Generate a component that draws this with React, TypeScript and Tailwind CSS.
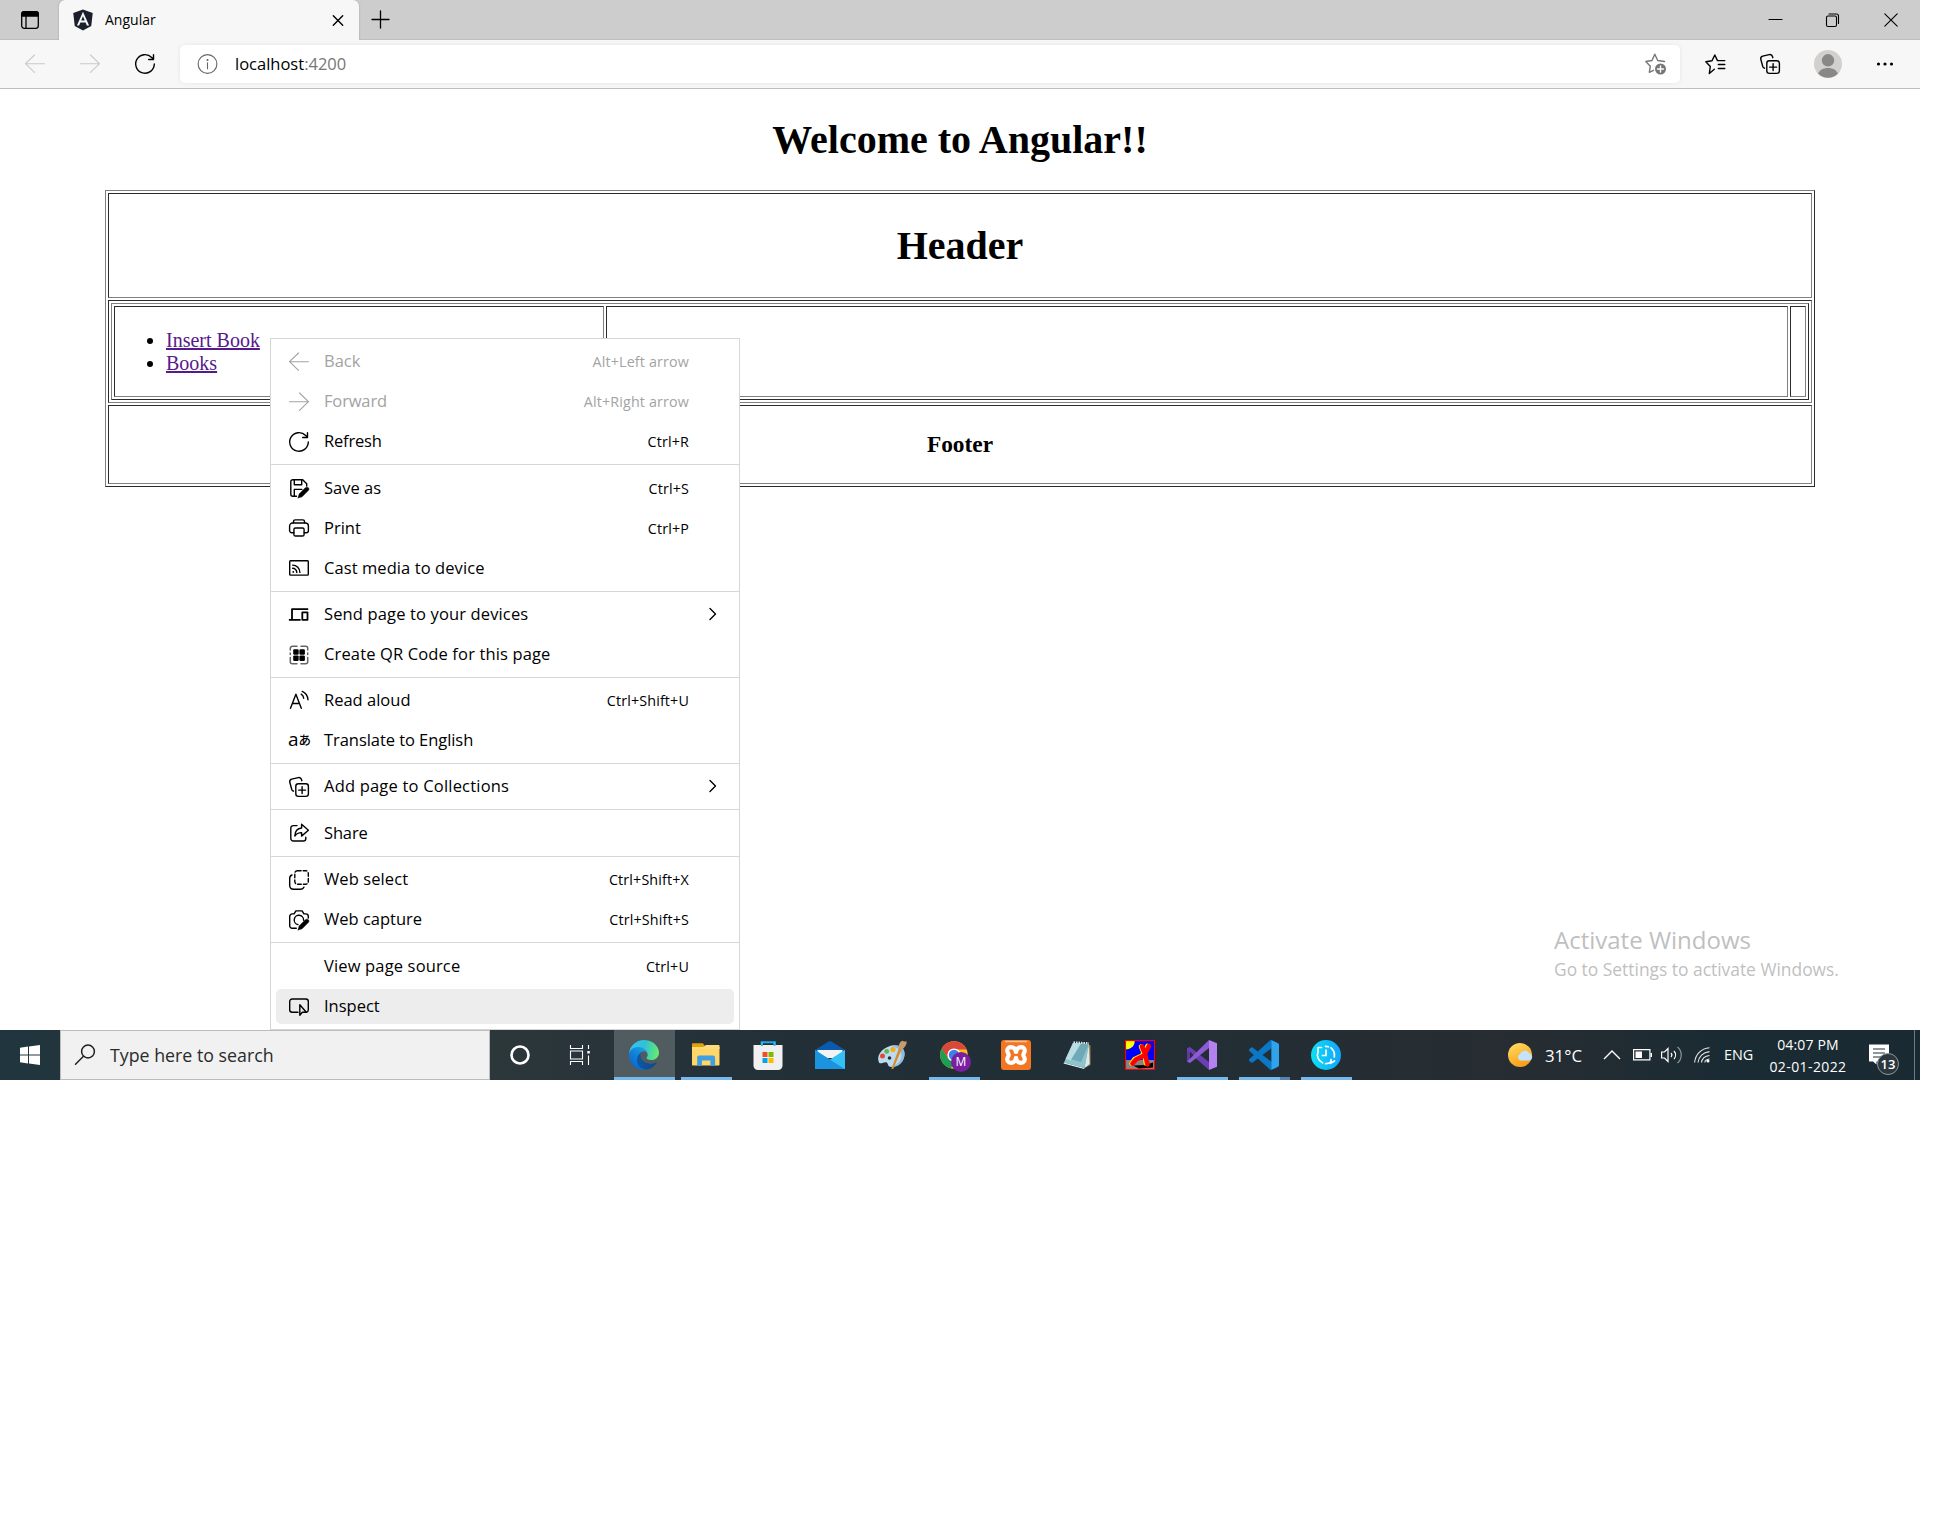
import React from "react";
import { FaAngular } from "react-icons/fa";

type IconProps = { children: React.ReactNode; className?: string; size?: number; sw?: number; vb?: string };

function Ico({ children, className = "", size = 20, sw = 1.2, vb = "0 0 20 20" }: IconProps) {
  return (
    <svg
      width={size}
      height={size}
      viewBox={vb}
      fill="none"
      stroke="currentColor"
      strokeWidth={sw}
      strokeLinecap="round"
      strokeLinejoin="round"
      className={`block shrink-0 overflow-visible ${className}`}
    >
      {children}
    </svg>
  );
}

const BackArrow = () => (
  <Ico sw={1.1}>
    <path d="M19.5 9.7H.5M9.5 1L.5 9.7l9 8.7" />
  </Ico>
);
const ForwardArrow = () => (
  <Ico sw={1.1}>
    <path d="M.5 9.7h19M10.500 1l9 8.700-9 8.700" />
  </Ico>
);
const Refresh = () => (
  <Ico sw={1.4}>
    <path d="M19.300 10A9.300 9.300 0 1 1 16.700 3.500L18.300 5M18.500 .8v4.700h-4.800" />
  </Ico>
);
const Collections = () => (
  <Ico sw={1.4}>
    <path d="M4.500 14.200C3.300 13.600 3 13.200 2.700 12.200L.8 5.300C.4 3.600 1.100 2.600 2.700 2.100l6.500-1.500c1.600-.4 2.800.3 3.300 1.900l.3 1.200" />
    <rect x="6.800" y="6.800" width="12.600" height="12.600" rx="2.600" />
    <path d="M13.100 9.600v7M9.600 13.100h7" />
  </Ico>
);
const PenOverlay = () => (
  <path d="M9.200 19.800l1-3.800 6.200-6.200c.9-.9 2.200-.8 2.900-.1s.8 2-.1 2.900L13 18.800l-3.800 1z" fill="currentColor" stroke="currentColor" strokeWidth="0.6" />
);
const SaveAs = () => (
  <Ico sw={1.4}>
    <path d="M7.500 18.300H3.800A2 2 0 0 1 1.800 16.300V3.700a2 2 0 0 1 2-2h9.900l4 4V8" />
    <path d="M5.300 2v4.800h7.400V2M5.300 18V11.400h7.500" />
    <PenOverlay />
  </Ico>
);
const Print = () => (
  <Ico sw={1.4}>
    <path d="M4.800 14.700H2.800a2.200 2.200 0 0 1-2.200-2.200V8a3 3 0 0 1 3-3h12.800a3 3 0 0 1 3 3v4.500a2.200 2.200 0 0 1-2.200 2.200h-2" />
    <path d="M4.500 4.800V3.600c0-1 .7-1.700 1.700-1.700h7.600c1 0 1.700.7 1.700 1.700v1.200" />
    <rect x="4.900" y="10" width="10.200" height="8" rx="1.600" />
  </Ico>
);
const Cast = () => (
  <Ico sw={1.4}>
    <rect x=".7" y="2.700" width="18.600" height="14.400" rx=".8" />
    <path d="M3.600 7.100a7.300 7.300 0 0 1 7.300 7.300M3.600 10.300a4.200 4.200 0 0 1 4.200 4.200" />
    <circle cx="4.300" cy="13.900" r=".9" fill="currentColor" stroke="none" />
  </Ico>
);
const Devices = () => (
  <Ico sw={1.8}>
    <path d="M3 14V4.200h15.300M.8 14.800h9.900" strokeLinecap="square" />
    <rect x="13.300" y="7.400" width="5.200" height="7.400" />
  </Ico>
);
const QrCode = () => (
  <Ico sw={1.5}>
    <path d="M1.300 5V3.300a2 2 0 0 1 2-2H8M12 1.300h4.700a2 2 0 0 1 2 2V5M18.700 12.500v4.200a2 2 0 0 1-2 2H12M8 18.700H3.300a2 2 0 0 1-2-2v-4.200M1.300 8v1.500M18.700 8v1.500" stroke="#666" />
    <g fill="currentColor" stroke="none">
      <rect x="4.200" y="4.200" width="5.500" height="5.500" rx="1.200" />
      <rect x="10.400" y="4.200" width="5.500" height="5.500" rx="1.200" />
      <rect x="4.200" y="10.400" width="5.500" height="5.500" rx="1.200" />
      <rect x="10.400" y="10.400" width="5.500" height="5.500" rx="1.200" />
    </g>
  </Ico>
);
const ReadAloud = () => (
  <Ico sw={1.4}>
    <path d="M1.500 17.300L6.900 3.200l5.400 14.100M3.400 12.500h7" />
    <path d="M12.200 3.200c1.500.9 2.300 2.100 2.500 4M13.200 .4c3.400 1.400 5.400 4.200 5.800 8.300" />
  </Ico>
);
const Translate = () => (
  <span className="flex h-5 w-[21px] items-center whitespace-nowrap text-[19px] leading-5">
    <span className="-ml-px -mt-[4px] w-[11px] font-['Open_Sans',sans-serif]">a</span>
    <span className="-mt-[2px] font-['Noto_Sans_CJK_JP',sans-serif] text-[12.500px] font-medium">あ</span>
  </span>
);
const Share = () => (
  <Ico sw={1.4}>
    <path d="M8 2.600H4.400a2.600 2.600 0 0 0-2.600 2.600v10.200A2.600 2.600 0 0 0 4.400 18h9.800a2.600 2.600 0 0 0 2.600-2.600v-1.200" />
    <path d="M12.600 1.300l6.800 6-6.800 5.800V9.600c-3.200 0-5.300 1.100-6.800 3.400.2-4.400 2.500-7.600 6.800-8z" />
  </Ico>
);
const WebSelect = () => (
  <Ico sw={1.4}>
    <rect x="5.800" y=".7" width="13.500" height="13.500" rx="2.600" strokeDasharray="3.700 2.100" />
    <path d="M3 5C1.300 5.600.7 6.700.7 8.300v7c0 2.500 1.500 4 4 4h7c1.700 0 2.700-.6 3.300-2.200" />
  </Ico>
);
const WebCapture = () => (
  <Ico sw={1.4}>
    <path d="M7.300 18.200H3.200A2.500 2.500 0 0 1 .7 15.700V6.400a2.500 2.500 0 0 1 2.500-2.500h1.900L6.900.9h6.200l1.800 3h1.900a2.500 2.500 0 0 1 2.500 2.500V8" />
    <path d="M9 14.600a4.700 4.700 0 1 1 5.600-4.400" />
    <PenOverlay />
  </Ico>
);
const Inspect = () => (
  <Ico sw={1.4}>
    <path d="M9 16.300H3.200a2.500 2.500 0 0 1-2.500-2.500V5.500A2.500 2.500 0 0 1 3.200 3h13.600a2.500 2.500 0 0 1 2.500 2.500v8.300c0 1.400-.8 2.200-1.800 2.400" />
    <path d="M10.800 8.700v10.500l2.500-2.900h4z" />
  </Ico>
);

type Item = {
  icon?: React.ReactNode;
  label: string;
  track?: string;
  keys?: string;
  sub?: boolean;
  off?: boolean;
  hot?: boolean;
};
type Group = { box: string; items: Item[] };

const groups: Group[] = [
  {
    box: "h-[126px]",
    items: [
      { icon: <BackArrow />, label: "Back", keys: "Alt+Left arrow", off: true },
      { icon: <ForwardArrow />, label: "Forward", track: "tracking-[-0.15px]", keys: "Alt+Right arrow", off: true },
      { icon: <Refresh />, label: "Refresh", track: "tracking-[-0.2px]", keys: "Ctrl+R" },
    ],
  },
  {
    box: "h-[127px]",
    items: [
      { icon: <SaveAs />, label: "Save as", keys: "Ctrl+S" },
      { icon: <Print />, label: "Print", keys: "Ctrl+P" },
      { icon: <Cast />, label: "Cast media to device", track: "tracking-[0.08px]" },
    ],
  },
  {
    box: "h-[86px]",
    items: [
      { icon: <Devices />, label: "Send page to your devices", track: "tracking-[0.14px]", sub: true },
      { icon: <QrCode />, label: "Create QR Code for this page", track: "tracking-[0.14px]" },
    ],
  },
  {
    box: "h-[86px]",
    items: [
      { icon: <ReadAloud />, label: "Read aloud", keys: "Ctrl+Shift+U" },
      { icon: <Translate />, label: "Translate to English", track: "tracking-[-0.06px]" },
    ],
  },
  {
    box: "h-[46px]",
    items: [{ icon: <Collections />, label: "Add page to Collections", track: "tracking-[0.2px]", sub: true }],
  },
  { box: "h-[47px]", items: [{ icon: <Share />, label: "Share", track: "tracking-[-0.15px]" }] },
  {
    box: "h-[86px]",
    items: [
      { icon: <WebSelect />, label: "Web select", track: "tracking-[0.1px]", keys: "Ctrl+Shift+X" },
      { icon: <WebCapture />, label: "Web capture", keys: "Ctrl+Shift+S" },
    ],
  },
  {
    box: "h-[86px]",
    items: [
      { label: "View page source", track: "tracking-[0.15px]", keys: "Ctrl+U" },
      { icon: <Inspect />, label: "Inspect", hot: true },
    ],
  },
];

function ContextMenu() {
  return (
    <div className="absolute left-[270px] top-[338px] w-[470px] border border-[#d6d6d6] bg-white">
      {groups.map((g, gi) => (
        <div
          key={gi}
          className={`${g.box} flex flex-col justify-center ${gi < groups.length - 1 ? "border-b border-[#d6d6d6]" : ""}`}
        >
          {g.items.map((it) => (
            <div key={it.label} className={`flex h-10 items-center px-[5px] ${it.off ? "text-[#a3a3a3]" : "text-black"}`}>
              <div className={`flex h-[35px] w-full items-center rounded-[5px] pl-[13px] ${it.hot ? "bg-[#ededed]" : ""}`}>
                <span className="flex w-[35px] shrink-0 items-center">{it.icon}</span>
                <span className={`flex-1 whitespace-nowrap pb-px text-[16.500px] leading-5 ${it.track ?? ""}`}>{it.label}</span>
                {it.keys && (
                  <span className="mr-[45px] whitespace-nowrap pt-px text-[14.300px] leading-5 tracking-[0.15px]">{it.keys}</span>
                )}
                {it.sub && (
                  <Ico size={14} vb="0 0 14 14" sw={1.4} className="mb-px mr-[14px]">
                    <path d="M4 1.500l5.500 5.500L4 12.500" />
                  </Ico>
                )}
              </div>
            </div>
          ))}
        </div>
      ))}
    </div>
  );
}

function TabStrip() {
  return (
    <div className="flex h-10 items-end bg-[#cdcdcd] shadow-[inset_0_-1px_0_#bdbdbd]">
      <div className="flex h-10 w-[59px] items-center pl-[21px]">
        <Ico size={18} vb="0 0 18 18" sw={1.3}>
          <rect x=".7" y=".7" width="16.600" height="16.600" rx="2.500" />
          <path d="M.7 5V3A2.400 2.400 0 0 1 3 .7h12A2.400 2.400 0 0 1 17.300 3v2z" fill="currentColor" />
          <path d="M5 5v12" />
        </Ico>
      </div>
      <div className="flex h-10 w-[300px] items-center rounded-t-[6px] bg-[#f7f7f7] pl-[11px] pr-[14px] shadow-[0_0_2px_rgba(0,0,0,0.25)] [clip-path:inset(0_-3px_0_-3px)]">
        <FaAngular className="h-[24px] w-[26px] text-[#1b1f2b]" />
        <span className="ml-[9px] flex-1 text-[14px] leading-5 text-black">Angular</span>
        <Ico size={16} vb="0 0 16 16" sw={1.4} className="mr-[-1px]">
          <path d="M3.300 3.800l9.400 9.400M12.700 3.800l-9.400 9.400" />
        </Ico>
      </div>
      <div className="flex h-10 flex-1 items-center pb-px pl-[13px]">
        <Ico size={17} vb="0 0 17 17" sw={1.3}>
          <path d="M8.500 0v17M0 8.500h17" />
        </Ico>
      </div>
      <div className="flex h-10 items-center gap-[44px] pb-px pr-[22px]">
        <Ico size={13} vb="0 0 13 13" sw={1.1}>
          <path d="M0 6.500h13" />
        </Ico>
        <Ico size={14} vb="0 0 14 14" sw={1.1}>
          <rect x=".5" y="3" width="10" height="10.500" rx="1.500" />
          <path d="M3 1h7.500a2 2 0 0 1 2 2v7.500" />
        </Ico>
        <Ico size={14} vb="0 0 14 14" sw={1.100}>
          <path d="M.8 .8l12.400 12.400M13.200 .8L.8 13.200" />
        </Ico>
      </div>
    </div>
  );
}

function Toolbar() {
  return (
    <div className="flex h-[49px] items-center border-b border-[#bdbdbd] bg-[#f7f7f7]">
      <div className="flex w-[180px] items-center gap-[35px] pl-[25px] text-[#c9c9c9]">
        <BackArrow />
        <ForwardArrow />
        <span className="text-black">
          <Refresh />
        </span>
      </div>
      <div className="flex h-[38px] w-[1500px] items-center rounded-[5px] bg-white pl-[17px] pr-[13px] shadow-[0_0_4px_rgba(0,0,0,0.08)]">
        <Ico sw={1.100} className="text-[#666]">
          <circle cx="10.500" cy="10" r="9.400" />
          <path d="M10.500 8.700v6" />
          <circle cx="10.500" cy="6" r=".5" fill="currentColor" />
        </Ico>
        <span className="ml-[18px] flex-1 pb-px text-[16.500px] leading-6 text-black">
          localhost<span className="text-[#767676]">:4200</span>
        </span>
        <Ico size={22} vb="0 0 22 22" sw={1.400} className="text-[#767676]">
          <path d="M8.500 17.300L4.300 19.300l1-6L.8 8.500l6.200-1L9.800 1.200l2.900 6.300 6.800 1" />
          <circle cx="15.500" cy="16" r="5.500" fill="currentColor" stroke="none" />
          <path d="M15.500 13v6M12.500 16h6" stroke="#fff" />
        </Ico>
      </div>
      <div className="flex flex-1 items-center pl-[25px] text-black">
        <Ico size={21} vb="0 0 21 21" sw={1.400}>
          <path d="M9.300 15.300L4.300 19.500l1-7L.8 7.800l6.200-1L9.800 1l2.700 5.600h7.300M13.300 10.500h6.500M13.300 14.500h6.500" />
        </Ico>
        <span className="ml-[34px]">
          <Collections />
        </span>
        <svg width="28" height="28" viewBox="0 0 28 28" className="ml-[34px]">
          <defs>
            <clipPath id="avatar">
              <circle cx="14" cy="14" r="13.800" />
            </clipPath>
          </defs>
          <circle cx="14" cy="14" r="14" fill="#d2d0ce" />
          <g clipPath="url(#avatar)" fill="#8a8886">
            <circle cx="14" cy="10.300" r="6.200" />
            <path d="M4 24c1.500-4 5-6 10-6s8.500 2 10 6v4H4z" />
          </g>
        </svg>
        <svg width="18" height="4" viewBox="0 0 18 4" className="ml-[34px]">
          <circle cx="2.500" cy="2" r="1.600" />
          <circle cx="9" cy="2" r="1.600" />
          <circle cx="15.500" cy="2" r="1.600" />
        </svg>
      </div>
    </div>
  );
}

const OUTSET = "border border-t-[#808080] border-l-[#808080] border-r-[#2c2c2c] border-b-[#2c2c2c]";
const INSET = "border border-t-[#2c2c2c] border-l-[#2c2c2c] border-r-[#808080] border-b-[#808080]";

function PageContent() {
  return (
    <div className="h-[941px] font-['Liberation_Serif',serif] text-black">
      <h1 className="pt-[28px] text-center text-[40px] font-bold leading-[46px]">Welcome to Angular!!</h1>
      <div className={`${OUTSET} ml-[105px] mt-[27px] flex h-[297px] w-[1710px] flex-col gap-[2px] p-[2px]`}>
        <div className={`${INSET} flex h-[105px] items-center justify-center`}>
          <h1 className="text-[40px] font-bold leading-[46px]">Header</h1>
        </div>
        <div className={`${INSET} h-[103px] p-[2px]`}>
          <div className={`${OUTSET} flex h-full gap-[2px] p-[2px]`}>
            <div className={`${INSET} flex w-[490px] items-center pt-px`}>
              <ul className="list-disc pl-[51px] text-[20px] leading-[23px]">
                <li>
                  <a className="text-[#551a8b] underline">Insert Book</a>
                </li>
                <li>
                  <a className="text-[#551a8b] underline">Books</a>
                </li>
              </ul>
            </div>
            <div className={`${INSET} flex-1`} />
            <div className={`${INSET} w-4`} />
          </div>
        </div>
        <div className={`${INSET} flex h-[79px] items-center justify-center pb-[2px]`}>
          <h3 className="text-[23.400px] font-bold leading-7">Footer</h3>
        </div>
      </div>
    </div>
  );
}

const EdgeLogo = () => (
  <svg width="30" height="30" viewBox="0 0 256 256">
    <defs>
      <linearGradient id="e1" x1="60" y1="170" x2="240" y2="200" gradientUnits="userSpaceOnUse">
        <stop offset="0" stopColor="#0c59a4" />
        <stop offset="1" stopColor="#114a8b" />
      </linearGradient>
      <linearGradient id="e2" x1="150" y1="90" x2="50" y2="230" gradientUnits="userSpaceOnUse">
        <stop offset="0" stopColor="#1b9de2" />
        <stop offset="0.500" stopColor="#1280d6" />
        <stop offset="1" stopColor="#0a6bd0" />
      </linearGradient>
      <linearGradient id="e3" x1="20" y1="50" x2="250" y2="110" gradientUnits="userSpaceOnUse">
        <stop offset="0" stopColor="#35c1f1" />
        <stop offset="0.450" stopColor="#2fc2d4" />
        <stop offset="1" stopColor="#66eb6e" />
      </linearGradient>
    </defs>
    <path fill="url(#e1)" d="M231 190.500c-3.400 1.800-6.900 3.400-10.500 4.700a101.700 101.700 0 01-35.700 6.400c-47 0-88-32.300-88-73.900a31.400 31.400 0 0116.300-27.300c-42.600 1.800-53.500 46.200-53.500 72.100 0 73.500 67.700 80.900 82.300 80.900 7.900 0 19.800-2.300 26.900-4.500l1.300-.5A128.300 128.300 0 00238 195a4.800 4.800 0 00-7-4.500z" />
    <path fill="url(#e2)" d="M105.700 241.400a79.200 79.200 0 01-22.700-21.300 80.700 80.700 0 0129.500-120c3.200-1.500 8.500-4.100 15.600-4a32.400 32.400 0 0125.700 13 31.900 31.900 0 016.300 18.700c0-.2 24.500-79.600-80-79.600-43.900 0-80 41.700-80 78.200a130.200 130.200 0 0012.100 56 128 128 0 00156.400 67 75.500 75.500 0 01-62.800-8z" />
    <path fill="url(#e3)" d="M152.300 148.900c-.8 1-3.300 2.500-3.300 5.700 0 2.600 1.700 5.100 4.700 7.200 14.400 10 41.500 8.700 41.600 8.700 10.700 0 21.100-2.900 30.300-8.300A61.400 61.400 0 00256 109.200c.3-22.400-8-37.300-11.300-43.900C223.500 23.900 177.700 0 128 0A128 128 0 000 126.200c.5-36.500 36.800-66 80-66 3.500 0 23.500.3 42 10a72.600 72.600 0 0130.900 29.300c6.100 10.600 7.200 24.100 7.200 29.500s-2.700 13.300-7.800 19.900z" />
  </svg>
);

const ExplorerLogo = () => (
  <svg width="30" height="30" viewBox="0 0 30 30">
    <path d="M1 4.500c0-.8.500-1.300 1.200-1.300h9.500l2.600 3V10H1z" fill="#e2a10c" />
    <path d="M1 7h27.500v17.500c0 .7-.4 1-1 1H2c-.7 0-1-.4-1-1z" fill="#ffd667" />
    <path d="M1 7h11.500l2.500-2h12.500c.6 0 1 .3 1 1v3H1z" fill="#ffdc7a" />
    <path d="M6.200 25.800v-8.300c0-1.200.8-2 2-2h13.900c1.200 0 2 .8 2 2v8.300h-4.700v-5.300h-8.500v5.300z" fill="#3f9fe0" />
  </svg>
);

const StoreLogo = () => (
  <svg width="30" height="30" viewBox="0 0 30 30">
    <path d="M8.700 7V2.200h13V7" fill="none" stroke="#1fa8ee" strokeWidth="2" />
    <path d="M.5 5h29v20.500c0 2.500-1.800 4.500-4.500 4.500H5c-2.700 0-4.500-2-4.500-4.500z" fill="#f0f0f0" />
    <path d="M8 2h2v4H8zM20.500 2h2v4h-2z" fill="#32b5f2" />
    <rect x="9.500" y="12" width="5" height="5" fill="#f25022" />
    <rect x="15.500" y="12" width="5" height="5" fill="#7fba00" />
    <rect x="9.500" y="18" width="5" height="5" fill="#00a4ef" />
    <rect x="15.500" y="18" width="5" height="5" fill="#ffb900" />
  </svg>
);

const MailLogo = () => (
  <svg width="30" height="30" viewBox="0 0 30 30">
    <path d="M0 10L13.500 1.600c1-.6 2-.6 3 0L30 10v4H0z" fill="#0a5aad" />
    <path d="M2.500 10h25v8H2.500z" fill="#f3f3f3" />
    <path d="M0 10l15 10 15-10v19H0z" fill="#36bdf3" />
    <path d="M0 10l30 19H0z" fill="#1b94e0" />
    <path d="M15 19.400L30 10v19z" fill="#35c0f5" />
  </svg>
);

const PaintLogo = () => (
  <svg width="32" height="30" viewBox="0 0 32 30">
    <path d="M14 6c7-2.300 14 .5 14.500 7 .5 8-5.500 14-13 14-4 0-3-3-4.800-4.500C8.500 21 5 25 3 22.500 0 16 5.500 8.500 14 6z" fill="#bcdcee" />
    <path d="M14 6c7-2.300 14 .5 14.500 7 .5 8-5.500 14-13 14 8-3 11.500-9 9.500-14-1.300-4-5-6.500-11-7z" fill="#8fbdda" />
    <circle cx="6.500" cy="16" r="2.500" fill="#e04a3f" />
    <circle cx="10.700" cy="11.400" r="2.400" fill="#58b947" />
    <circle cx="17" cy="9.500" r="2.600" fill="#f2b01e" />
    <circle cx="13.500" cy="18" r="1.800" fill="#22313a" />
    <path d="M15.300 29l7.700-21 2.800 1-8.500 20z" fill="#d98a35" />
    <path d="M22.500 8c.5-3.500 1-6.500 4-7.300 1.500.8 2.500 1 4.300.8-.2 3.500-2 6-4.800 8z" fill="#c99b6a" />
  </svg>
);

const ChromeLogo = () => (
  <div className="relative h-[30px] w-[30px]">
    <svg width="34" height="34" viewBox="0 0 34 34" className="block">
      <defs>
        <clipPath id="chr">
          <circle cx="15" cy="15" r="13.800" />
        </clipPath>
      </defs>
      <g clipPath="url(#chr)">
        <rect width="30" height="30" fill="#fbc116" />
        <path d="M0 5L15 0h15v9.500H15L9 18 0 5z" fill="#d9483b" />
        <path d="M1.500 7L9 18l6 4-4 8H0V5z" fill="#1e9d55" />
      </g>
      <circle cx="15" cy="15" r="6.600" fill="#fff" />
      <circle cx="15" cy="15" r="5.200" fill="#3f7fe8" />
      <circle cx="22" cy="22" r="10" fill="#7a1fa2" />
    </svg>
    <span className="absolute left-[12px] top-[12px] w-5 text-center font-['Open_Sans',sans-serif] text-[12px] leading-5 text-white">M</span>
  </div>
);

const XamppLogo = () => (
  <svg width="30" height="30" viewBox="0 0 30 30">
    <rect width="30" height="30" rx="3" fill="#f37623" />
    <path d="M4 1.500h22" stroke="#fbc39a" strokeWidth="1.500" />
    <path
      d="M15 12.300C14.500 9 12.500 7.200 9.800 7.200 7 7.200 5.800 9.500 6.500 11.800c.4 1.300 1.200 2 1.200 3.200s-1 2-1.300 3.200c-.6 2.300.8 4.600 3.500 4.600 2.600 0 4.600-1.800 5.100-5.100.5 3.300 2.500 5.100 5.100 5.100 2.700 0 4.100-2.300 3.500-4.600-.3-1.200-1.300-2-1.300-3.200s.8-1.900 1.200-3.200c.7-2.300-.5-4.600-3.300-4.600-2.700 0-4.700 1.800-5.200 5.100z"
      fill="none"
      stroke="#fff"
      strokeWidth="4.200"
      strokeLinejoin="round"
    />
    <path d="M10.500 15h9" stroke="#f37623" strokeWidth="2.200" />
  </svg>
);

const NotepadLogo = () => (
  <svg width="30" height="30" viewBox="0 0 30 30">
    <path d="M24 4l3.500 1.500V25l-6 3z" fill="#9a7a45" />
    <path d="M10 3l16 1-4.500 24L1 22.500z" fill="#8fc3cf" />
    <path d="M10 3l16 1-8 18L4 18z" fill="#6fa9b8" />
    <path d="M10 3l8 .5L7.500 20.500l-5-1.500z" fill="#b9dde3" />
    <path d="M26 4l.7 20-5.200 4z" fill="#d5edf0" />
    <path d="M1 22.500l20.500 5.500-.3 1L.5 23.500z" fill="#e9f5f7" />
    <path d="M10.500 2.300l15.500 1" stroke="#e0e6e8" strokeWidth="2" strokeDasharray="1.500 1" />
  </svg>
);

const FigureLogo = () => (
  <svg width="30" height="30" viewBox="0 0 30 30">
    <rect width="30" height="30" fill="#0000fe" />
    <path d="M0 20h30v10H0z" fill="#868686" />
    <path d="M0 0h9.500c1 5-3 9.500-9.500 9.500z" fill="#ffff00" />
    <path d="M8 25.500l12-.5 8-2.500v5l-14 1z" fill="#000" />
    <g fill="none" strokeLinecap="round" strokeLinejoin="round">
      <path d="M16 6.500l3 7 2 10M22.500 6L17 15.500 9.500 19l-3 4.500" stroke="#ffe000" strokeWidth="4.600" />
      <path d="M17 6.500l3 7 2.500 11M24 6l-5 9.500-8 4-3.500 4" stroke="#ff0000" strokeWidth="4.600" />
    </g>
    <rect x=".5" y=".5" width="29" height="29" fill="none" stroke="#ff0000" strokeWidth="1.200" />
  </svg>
);

const VisualStudioLogo = () => (
  <svg width="30" height="30" viewBox="0 0 30 30">
    <path d="M0 8.500L3 7v16L0 21.500z" fill="#5d3aa0" />
    <path d="M3 7l19 15v8L0 10.500V8.500z" fill="#6b3fb3" />
    <path d="M0 21.500L22 0v8L3 23z" fill="#9059d6" />
    <path d="M22 0l8 3.300v23.400L22 30z" fill="#b382f0" />
    <path d="M3 11.500v7L6.500 15z" fill="#263036" />
  </svg>
);

const VsCodeLogo = () => (
  <svg width="30" height="30" viewBox="0 0 24 24">
    <path
      fill="#0a78c6"
      d="M23.150 2.587L18.210.21a1.494 1.494 0 0 0-1.705.29l-9.460 8.630-4.120-3.128a.999.999 0 0 0-1.276.057L.327 7.261A1 1 0 0 0 .326 8.740L3.899 12 .326 15.260a1 1 0 0 0 .001 1.479L1.650 17.940a.999.999 0 0 0 1.276.057l4.120-3.128 9.460 8.630a1.492 1.492 0 0 0 1.704.290l4.942-2.377A1.500 1.500 0 0 0 24 20.060V3.939a1.500 1.500 0 0 0-.850-1.352zm-5.146 14.861L10.826 12l7.178-5.448v10.896z"
    />
    <path d="M18 .2l5.200 2.400c.5.300.8.800.8 1.400v16c0 .6-.3 1.100-.8 1.400L18 23.800z" fill="#2fa3ec" />
  </svg>
);

const ClockLogo = () => (
  <svg width="30" height="30" viewBox="0 0 30 30">
    <defs>
      <linearGradient id="clk" x1="0" y1="0" x2="1" y2="0">
        <stop offset="0" stopColor="#0be0f5" />
        <stop offset="1" stopColor="#12a4fb" />
      </linearGradient>
    </defs>
    <circle cx="15" cy="15" r="15" fill="url(#clk)" />
    <g fill="none" stroke="#fff" strokeWidth="1.700" strokeLinecap="round">
      <path d="M7 8v4.500M10.500 7.500H7M7.200 11.500a8.500 8.500 0 0 0 4.300 11.300M14.500 23.700c2 .1 4-.5 5.500-1.800M23.300 17c.6-3.500-.4-6.800-3.300-9.200M14.500 6.300c1 0 2 .1 3 .5M20 19.500V23l3.500-2" />
      <path d="M15 10v5.500h-3.500" />
    </g>
  </svg>
);

type App = { logo: React.ReactNode; run?: boolean; active?: boolean; stack?: boolean };
const apps: App[] = [
  { logo: <EdgeLogo />, active: true },
  { logo: <ExplorerLogo />, run: true },
  { logo: <StoreLogo /> },
  { logo: <MailLogo /> },
  { logo: <PaintLogo /> },
  { logo: <ChromeLogo />, run: true },
  { logo: <XamppLogo /> },
  { logo: <NotepadLogo /> },
  { logo: <FigureLogo /> },
  { logo: <VisualStudioLogo />, run: true },
  { logo: <VsCodeLogo />, run: true, stack: true },
  { logo: <ClockLogo />, run: true },
];

function Taskbar() {
  return (
    <div className="flex h-[50px] items-stretch bg-[linear-gradient(90deg,#20353e_0,#22353d_60px,#2c373a_490px,#28343a_610px,#232f37_800px,#222e36_1100px,#272d32_1500px,#1b2b33_1720px,#192a33_1920px)] text-white">
      <div className="flex w-[60px] items-center pl-5">
        <svg width="20" height="20" viewBox="0 0 20 20" fill="#fff">
          <path d="M0 2.800L8 1.600V9.500H0zM9 1.500L20 0v9.500H9zM0 10.500h8v7.900l-8-1.200zM9 10.500h11V20L9 18.500z" />
        </svg>
      </div>
      <div className="flex w-[430px] items-center border border-[#bcbcbc] bg-[#f1f1f1] pl-[14px] text-[#1f1f1f]">
        <Ico size={21} vb="0 0 21 21" sw={1.500} className="mb-px">
          <circle cx="13" cy="7.500" r="6.400" />
          <path d="M8.500 12.200L.5 20.200" />
        </Ico>
        <span className="ml-[14px] text-[17.800px] leading-6 text-[#2b2b2b]">Type here to search</span>
      </div>
      <div className="flex w-[123px] items-center pl-5">
        <svg width="20" height="20" viewBox="0 0 20 20">
          <circle cx="10" cy="10" r="8.500" fill="none" stroke="#fff" strokeWidth="2.600" />
        </svg>
        <svg width="22" height="20" viewBox="0 0 22 20" fill="none" stroke="#fff" strokeWidth="1.100" className="ml-[39px]">
          <path d="M1.500 0v3.500h12V0M1.500 20v-3.500h12V20M1.500 6h12v8h-12zM19.500 0v4M19.500 10.500V20" />
          <rect x="18.300" y="6" width="2.500" height="2.500" fill="#fff" stroke="none" />
        </svg>
      </div>
      <div className="flex">
        {apps.map((a, i) => (
          <div key={i} className="flex w-[62px] flex-col items-center pl-px">
            <div className={`flex h-[47px] w-full items-center justify-center pr-px pt-[3px] ${a.active ? "bg-[#515c61]" : ""}`}>
              {a.logo}
            </div>
            {a.active && <div className="h-[3px] w-full bg-[#76b9ed]" />}
            {a.run && (
              <div className="flex h-[3px] w-[51px] bg-[#76b9ed]">{a.stack && <div className="ml-[41px] w-[10px] bg-[#5585ad]" />}</div>
            )}
          </div>
        ))}
      </div>
      <div className="flex flex-1 items-center pl-[151px]">
        <svg width="26" height="26" viewBox="0 0 26 26" className="shrink-0">
          <defs>
            <linearGradient id="sun" x1="0" y1="0" x2=".4" y2="1">
              <stop offset="0" stopColor="#ffe066" />
              <stop offset="1" stopColor="#f9a01b" />
            </linearGradient>
          </defs>
          <circle cx="12" cy="13" r="12" fill="url(#sun)" />
          <path d="M12.500 18.500a3.500 3.500 0 0 1-.5-6.500 5 5 0 0 1 9-1 4 4 0 0 1 1 7.500z" fill="#c4e3fb" />
        </svg>
        <span className="ml-[11px] w-[40px] whitespace-nowrap pt-[2px] text-[16.800px] leading-5">31°C</span>
        <Ico size={16} vb="0 0 16 16" sw={1.400} className="ml-[19px]">
          <path d="M0 12l8-8 8 8" strokeLinecap="butt" strokeLinejoin="miter" />
        </Ico>
        <svg width="19" height="12" viewBox="0 0 19 12" className="ml-[13px]">
          <path d="M.6.6h16.300v10.300H.6z" fill="none" stroke="#fff" strokeWidth="1.200" />
          <path d="M2.500 2.500H9V9H2.500zM17.500 4H19v4h-1.500z" fill="#fff" />
        </svg>
        <svg width="21" height="18" viewBox="0 0 21 18" fill="none" stroke="#fff" strokeWidth="1.200" className="ml-[9px]">
          <path d="M.6 6h2.900L7 2.500v13L3.500 12H.6z" />
          <path d="M10 7a3 3 0 0 1 0 4M13 5a6 6 0 0 1 0 8" />
          <path d="M16.500 1a10.500 10.500 0 0 1 0 16" stroke="#8d969a" />
        </svg>
        <svg width="16" height="16" viewBox="0 0 16 16" fill="none" stroke="#e8e8e8" strokeWidth="1.100" className="ml-[12px]">
          <path d="M.6 15.500C1.500 7.500 7 1.500 15.500.8M4 15.500C4.600 9.500 9 5.200 15.500 4.600M7.500 15.500c.5-3.800 3.500-6.500 8-7M10.800 15.500c.2-1.800 1.900-3.300 4.700-3.500" />
          <circle cx="14" cy="14" r="1.500" fill="#fff" stroke="none" />
        </svg>
        <span className="ml-[14px] w-[30px] whitespace-nowrap text-[14.400px] leading-5">ENG</span>
        <div className="ml-[4px] w-[100px] text-center text-[14px] leading-[23px] tracking-[0.15px]">
          <div>04:07 PM</div>
          <div className="-mt-px tracking-[0.4px]">02-01-2022</div>
        </div>
        <div className="relative ml-[11px] h-[30px] w-[32px]">
          <svg width="20" height="22" viewBox="0 0 20 22" className="mt-[3px] block">
            <path d="M0 1.500h20v17H7.500v3L4 18.500H0z" fill="#fff" />
            <path d="M4 6h12M4 10h12M4 14h8" stroke="#22313a" strokeWidth="1.200" />
          </svg>
          <span className="absolute left-[8px] top-[13px] flex h-[22px] w-[22px] items-center justify-center rounded-full border border-[#8d969a] bg-[#2c373d] text-[13px] font-semibold leading-none">
            13
          </span>
        </div>
        <div className="ml-auto mr-[5px] h-full w-px bg-[#6f7a7f]" />
      </div>
    </div>
  );
}

export default function App() {
  return (
    <div className="h-[1536px] w-[1936px] overflow-hidden bg-white font-['Open_Sans',sans-serif]">
      <div className="relative h-[1080px] w-[1920px]">
        <TabStrip />
        <Toolbar />
        <PageContent />
        <Taskbar />
        <ContextMenu />
        <div className="absolute left-[1554px] top-[924px] whitespace-nowrap text-[#bfbfbf]">
          <div className="text-[24px] leading-8">Activate Windows</div>
          <div className="-mt-px text-[17.400px] leading-7">Go to Settings to activate Windows.</div>
        </div>
      </div>
    </div>
  );
}
